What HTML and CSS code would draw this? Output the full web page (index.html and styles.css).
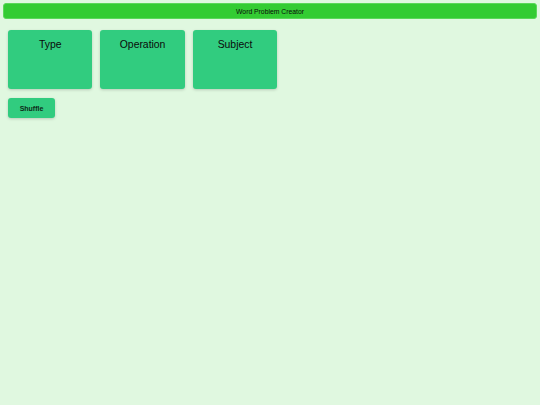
FILE: index.html
```html
<!DOCTYPE html>
<html>
<head>
<meta charset="utf-8">
<link rel="stylesheet" href="styles.css">
</head>
<body>
<header class="topbar">Word Problem Creator</header>
<main class="content">
  <section class="cards">
    <div class="card"><h2 class="card-title">Type</h2></div>
    <div class="card"><h2 class="card-title">Operation</h2></div>
    <div class="card"><h2 class="card-title">Subject</h2></div>
  </section>
  <button class="shuffle">Shuffle</button>
</main>
</body>
</html>
```
FILE: styles.css
```css
html, body {
  margin: 0;
  padding: 0;
  background: #e0f8e0;
  font-family: "Liberation Sans", Arial, sans-serif;
  color: #111;
}
body {
  padding: 3px;
  min-height: 405px;
  box-sizing: border-box;
}
.topbar {
  height: 16px;
  box-sizing: border-box;
  background: #33cc33;
  border: 1px solid #5ad85a;
  border-radius: 3px;
  display: flex;
  align-items: center;
  justify-content: center;
  font-size: 6.8px;
  color: #0a0a0a;
}
.content {
  padding: 11px 5px;
  display: flex;
  flex-direction: column;
  align-items: flex-start;
  gap: 9px;
}
.cards {
  display: flex;
  gap: 8px;
}
.card {
  width: 84.4px;
  height: 59px;
  background: #31cc7f;
  border-radius: 3px;
  box-shadow: 0 1px 3px rgba(0, 0, 0, 0.18);
  display: flex;
  flex-direction: column;
  align-items: center;
}
.card-title {
  margin: 9px 0 0;
  font-size: 10.4px;
  font-weight: normal;
  color: #0a0a0a;
}
.shuffle {
  width: 47px;
  height: 20px;
  background: #31cc7f;
  border: none;
  border-radius: 3px;
  box-shadow: 0 1px 3px rgba(0, 0, 0, 0.18);
  font-family: "Liberation Sans", Arial, sans-serif;
  font-size: 7px;
  font-weight: bold;
  color: #0d2a18;
  padding: 0;
}
```
